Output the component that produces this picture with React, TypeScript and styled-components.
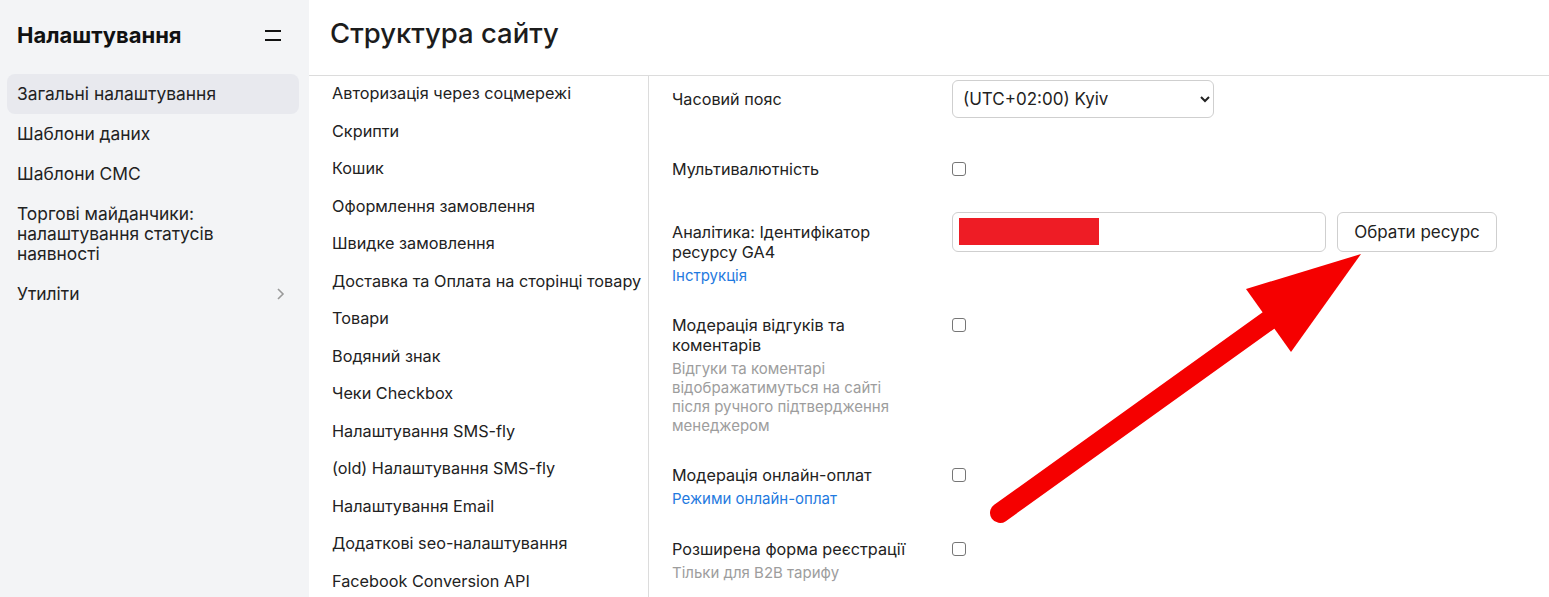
import React from 'react';
import styled, { createGlobalStyle } from 'styled-components';

const GlobalStyle = createGlobalStyle`
    html, body {
        margin: 0;
        padding: 0;
        height: 100%;
        overflow: hidden;
        background: #fff;
        font-family: Inter, "Noto Sans", "DejaVu Sans", sans-serif;
        color: #222;
    }
    #root {
        height: 100%;
    }
`;

const Page = styled.div`
    position: relative;
    display: flex;
    height: 597px;
    width: 1549px;
`;

const Sidebar = styled.aside`
    width: 309px;
    flex-shrink: 0;
    background: #f3f4f6;
    box-sizing: border-box;
`;

const SidebarHead = styled.div`
    display: flex;
    align-items: center;
    justify-content: space-between;
    height: 28px;
    margin: 21px 28px 25px 17px;
`;

const SidebarTitle = styled.h1`
    margin: 0;
    font-size: 22px;
    line-height: 28px;
    font-weight: 700;
    color: #111;
`;

const MenuIcon = styled.svg`
    width: 16px;
    height: 12px;
    display: block;
`;

const SideNav = styled.ul`
    list-style: none;
    margin: 0;
    padding: 0;
`;

const SideItem = styled.li<{ $active?: boolean }>`
    display: flex;
    align-items: center;
    justify-content: space-between;
    margin: 0 10px 0 7px;
    padding: 10px 14px 10px 10px;
    border-radius: 8px;
    font-size: 17.4px;
    line-height: 20px;
    color: #222;
    background: ${p => (p.$active ? '#e8e9ee' : 'transparent')};
`;

const Chevron = styled.svg`
    width: 9px;
    height: 14px;
    flex-shrink: 0;
`;

const Main = styled.main`
    flex: 1;
    display: flex;
    flex-direction: column;
    min-width: 0;
`;

const Header = styled.header`
    height: 76px;
    box-sizing: border-box;
    display: flex;
    align-items: center;
    padding: 0 0 10px 21px;
    border-bottom: 1px solid #dcdcdc;
`;

const PageTitle = styled.h2`
    margin: 0;
    font-size: 27.5px;
    line-height: 34px;
    font-weight: 500;
    color: #1c1c1c;
`;

const Body = styled.div`
    flex: 1;
    display: flex;
    min-height: 0;
`;

const SectionNav = styled.ul`
    list-style: none;
    margin: 0;
    padding: 0;
    width: 340px;
    flex-shrink: 0;
    box-sizing: border-box;
    border-right: 1px solid #dcdcdc;
`;

const SectionItem = styled.li`
    padding: 7px 0 10.5px 23px;
    font-size: 16.25px;
    line-height: 20px;
    color: #222;
    white-space: nowrap;
`;

const Content = styled.div`
    flex: 1;
    padding-left: 23px;
`;

const Row = styled.div<{ $mt: number }>`
    display: grid;
    grid-template-columns: 235px auto;
    column-gap: 45px;
    align-items: start;
    margin-top: ${p => p.$mt}px;
`;

const LabelCol = styled.div<{ $pt?: number }>`
    padding-top: ${p => p.$pt || 0}px;
`;

const Label = styled.div`
    font-size: 16.2px;
    line-height: 20px;
    color: #222;
`;

const Hint = styled.div`
    margin-top: 3.5px;
    font-size: 15px;
    line-height: 19px;
    color: #9d9d9d;
`;

const HintLink = styled.a`
    display: block;
    margin-top: 3.5px;
    font-size: 15px;
    line-height: 19px;
    color: #1f7ae0;
    text-decoration: none;
`;

const Select = styled.select`
    width: 262px;
    height: 38px;
    padding: 0 6px;
    border: 1px solid #cfcfcf;
    border-radius: 6px;
    background: #fff;
    font-family: Inter, "Noto Sans", sans-serif;
    font-size: 17px;
    color: #222;
`;

const Checkbox = styled.span`
    display: block;
    width: 14px;
    height: 14px;
    margin-top: 3px;
    box-sizing: border-box;
    border: 1.5px solid #767676;
    border-radius: 3px;
    background: #fff;
`;

const FieldGroup = styled.div`
    display: flex;
    gap: 11px;
`;

const TextInput = styled.div`
    width: 374px;
    height: 40px;
    box-sizing: border-box;
    padding: 5px 6px;
    border: 1px solid #cfcfcf;
    border-radius: 6px;
`;

const Redacted = styled.div`
    width: 140px;
    height: 27px;
    background: #ee1c25;
`;

const Button = styled.button`
    width: 160px;
    height: 40px;
    border: 1px solid #cfcfcf;
    border-radius: 6px;
    background: #fff;
    font-family: Inter, "Noto Sans", sans-serif;
    font-size: 17px;
    color: #222;
`;

const Annotation = styled.svg`
    position: absolute;
    left: 0;
    top: 0;
    width: 1549px;
    height: 597px;
    pointer-events: none;
`;

const sections = [
    'Авторизація через соцмережі',
    'Скрипти',
    'Кошик',
    'Оформлення замовлення',
    'Швидке замовлення',
    'Доставка та Оплата на сторінці товару',
    'Товари',
    'Водяний знак',
    'Чеки Checkbox',
    'Налаштування SMS-fly',
    '(old) Налаштування SMS-fly',
    'Налаштування Email',
    'Додаткові seo-налаштування',
    'Facebook Conversion API'
];

const App: React.FC = () => (
    <Page>
        <GlobalStyle />
        <Sidebar>
            <SidebarHead>
                <SidebarTitle>Налаштування</SidebarTitle>
                <MenuIcon viewBox="0 0 16 12">
                    <rect x="0" y="1" width="16" height="2" fill="#111" />
                    <rect x="0" y="10" width="16" height="2" fill="#111" />
                </MenuIcon>
            </SidebarHead>
            <SideNav>
                <SideItem $active>Загальні налаштування</SideItem>
                <SideItem>Шаблони даних</SideItem>
                <SideItem>Шаблони СМС</SideItem>
                <SideItem>Торгові майданчики: налаштування статусів наявності</SideItem>
                <SideItem>
                    Утиліти
                    <Chevron viewBox="0 0 9 14">
                        <path d="M2 2l5 5-5 5" fill="none" stroke="#9a9a9a" strokeWidth="1.6" />
                    </Chevron>
                </SideItem>
            </SideNav>
        </Sidebar>
        <Main>
            <Header>
                <PageTitle>Структура сайту</PageTitle>
            </Header>
            <Body>
                <SectionNav>
                    {sections.map(s => (
                        <SectionItem key={s}>{s}</SectionItem>
                    ))}
                </SectionNav>
                <Content>
                    <Row $mt={4}>
                        <LabelCol $pt={9}>
                            <Label>Часовий пояс</Label>
                        </LabelCol>
                        <Select defaultValue="kyiv">
                            <option value="kyiv">(UTC+02:00) Kyiv</option>
                        </Select>
                    </Row>
                    <Row $mt={41}>
                        <LabelCol>
                            <Label>Мультивалютність</Label>
                        </LabelCol>
                        <Checkbox />
                    </Row>
                    <Row $mt={33}>
                        <LabelCol $pt={10}>
                            <Label>Аналітика: Ідентифікатор ресурсу GA4</Label>
                            <HintLink href="#">Інструкція</HintLink>
                        </LabelCol>
                        <FieldGroup>
                            <TextInput>
                                <Redacted />
                            </TextInput>
                            <Button>Обрати ресурс</Button>
                        </FieldGroup>
                    </Row>
                    <Row $mt={30.5}>
                        <LabelCol>
                            <Label>Модерація відгуків та коментарів</Label>
                            <Hint>
                                Відгуки та коментарі відображатимуться на сайті після ручного
                                підтвердження менеджером
                            </Hint>
                        </LabelCol>
                        <Checkbox />
                    </Row>
                    <Row $mt={30.5}>
                        <LabelCol>
                            <Label>Модерація онлайн-оплат</Label>
                            <HintLink href="#">Режими онлайн-оплат</HintLink>
                        </LabelCol>
                        <Checkbox />
                    </Row>
                    <Row $mt={31.5}>
                        <LabelCol>
                            <Label>Розширена форма реєстрації</Label>
                            <Hint>Тільки для B2B тарифу</Hint>
                        </LabelCol>
                        <Checkbox />
                    </Row>
                </Content>
            </Body>
        </Main>
        <Annotation viewBox="0 0 1549 597">
            <line
                x1="1000"
                y1="513"
                x2="1272"
                y2="318"
                stroke="#f50000"
                strokeWidth="20"
                strokeLinecap="round"
            />
            <polygon points="1361,254 1246,289 1291,352" fill="#f50000" />
        </Annotation>
    </Page>
);

export default App;
